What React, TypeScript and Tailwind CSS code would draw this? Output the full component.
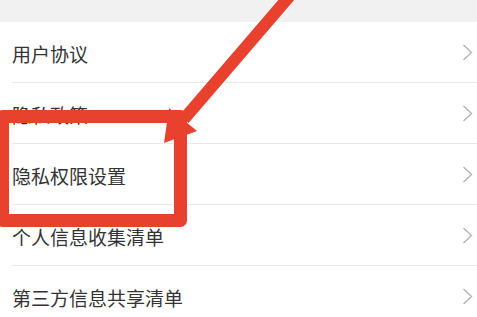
import React from "react";

const items = ["用户协议", "隐私政策", "隐私权限设置", "个人信息收集清单", "第三方信息共享清单"];

function Chevron() {
	return (
		<svg width="11" height="17" viewBox="0 0 11 17" fill="none">
			<polyline points="1.5,1 9.5,8.5 1.5,16" stroke="#b3b3b3" strokeWidth="1.4" />
		</svg>
	);
}

export default function App() {
	return (
		<div className="relative w-[477px] h-[317px] overflow-hidden bg-white font-['Noto_Sans_CJK_SC','Noto_Sans',sans-serif]">
			<div className="h-[22px] bg-[#f1f1f2]" />
			{items.map((label) => (
				<div key={label} className="h-[61px] pl-3">
					<div className="h-full flex items-center justify-between border-b border-[#e9e9e9] pr-[4px]">
						<span className="text-[19px] text-[#333] leading-none pt-[3px]">{label}</span>
						<Chevron />
					</div>
				</div>
			))}

			{/* red annotation: box + arrow */}
			<svg
				className="absolute inset-0 pointer-events-none"
				width="477"
				height="317"
				viewBox="0 0 477 317">
				<rect
					x="2.5"
					y="116.5"
					width="178"
					height="104"
					fill="none"
					stroke="#e8412e"
					strokeWidth="13"
					strokeLinejoin="round"
				/>
				<line x1="300" y1="-16" x2="184" y2="119" stroke="#e8412e" strokeWidth="12" />
				<polygon points="169,108 197,131 164,143" fill="#e8412e" />
			</svg>
		</div>
	);
}
